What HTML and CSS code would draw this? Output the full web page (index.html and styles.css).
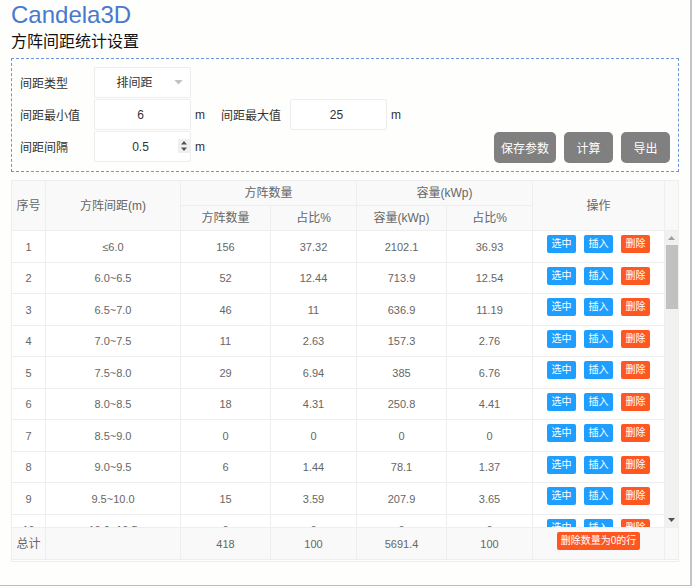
FILE: index.html
```html
<!DOCTYPE html>
<html lang="zh-CN">
<head>
<meta charset="utf-8">
<title>Candela3D</title>
<link rel="stylesheet" href="styles.css">
</head>
<body>
<main class="page">
  <h1 class="brand">Candela3D</h1>
  <h2 class="subtitle">方阵间距统计设置</h2>

  <form class="panel">
    <div class="fields">
      <div class="field-row">
        <label class="label" for="type">间距类型</label>
        <div class="control">
          <select id="type" class="box box-select"><option>排间距</option></select>
          <svg class="caret" viewBox="0 0 10 6" aria-hidden="true"><path d="M0 0h10L5 5.500z"/></svg>
        </div>
      </div>
      <div class="field-row">
        <label class="label" for="min">间距最小值</label>
        <div class="control"><input id="min" class="box" type="text" value="6"></div>
        <span class="unit">m</span>
        <label class="label label-second" for="max">间距最大值</label>
        <div class="control"><input id="max" class="box" type="text" value="25"></div>
        <span class="unit">m</span>
      </div>
      <div class="field-row">
        <label class="label" for="step">间距间隔</label>
        <div class="control">
          <input id="step" class="box box-number" type="number" step="0.5" value="0.5">
          <svg class="spinner" viewBox="0 0 12 14" aria-hidden="true"><path class="spinner-bg" d="M0 0h12v14H0z"/><path d="M3 5.500L6 2l3 3.500zM3 8.500L6 12l3-3.500z"/></svg>
        </div>
        <span class="unit">m</span>
      </div>
    </div>
    <div class="actions">
      <button class="action" type="button">保存参数</button>
      <button class="action" type="button">计算</button>
      <button class="action" type="button">导出</button>
    </div>
  </form>

  <section class="grid">
    <div class="band band-head">
      <table class="table">
        <colgroup><col class="c-no"><col class="c-range"><col class="c-num"><col class="c-pct"><col class="c-num"><col class="c-pct"><col class="c-ops"></colgroup>
        <thead>
          <tr><th rowspan="2">序号</th><th rowspan="2">方阵间距(m)</th><th colspan="2">方阵数量</th><th colspan="2">容量(kWp)</th><th rowspan="2">操作</th></tr>
          <tr><th>方阵数量</th><th>占比%</th><th>容量(kWp)</th><th>占比%</th></tr>
        </thead>
      </table>
      <div class="gutter"></div>
    </div>

    <div class="band">
      <div class="scroll">
        <table class="table">
          <colgroup><col class="c-no"><col class="c-range"><col class="c-num"><col class="c-pct"><col class="c-num"><col class="c-pct"><col class="c-ops"></colgroup>
          <tbody>
            <tr><td>1</td><td>≤6.0</td><td>156</td><td>37.32</td><td>2102.1</td><td>36.93</td><td class="ops"><div class="btns"><button class="btn">选中</button><button class="btn">插入</button><button class="btn btn-danger">删除</button></div></td></tr>
            <tr><td>2</td><td>6.0~6.5</td><td>52</td><td>12.44</td><td>713.9</td><td>12.54</td><td class="ops"><div class="btns"><button class="btn">选中</button><button class="btn">插入</button><button class="btn btn-danger">删除</button></div></td></tr>
            <tr><td>3</td><td>6.5~7.0</td><td>46</td><td>11</td><td>636.9</td><td>11.19</td><td class="ops"><div class="btns"><button class="btn">选中</button><button class="btn">插入</button><button class="btn btn-danger">删除</button></div></td></tr>
            <tr><td>4</td><td>7.0~7.5</td><td>11</td><td>2.63</td><td>157.3</td><td>2.76</td><td class="ops"><div class="btns"><button class="btn">选中</button><button class="btn">插入</button><button class="btn btn-danger">删除</button></div></td></tr>
            <tr><td>5</td><td>7.5~8.0</td><td>29</td><td>6.94</td><td>385</td><td>6.76</td><td class="ops"><div class="btns"><button class="btn">选中</button><button class="btn">插入</button><button class="btn btn-danger">删除</button></div></td></tr>
            <tr><td>6</td><td>8.0~8.5</td><td>18</td><td>4.31</td><td>250.8</td><td>4.41</td><td class="ops"><div class="btns"><button class="btn">选中</button><button class="btn">插入</button><button class="btn btn-danger">删除</button></div></td></tr>
            <tr><td>7</td><td>8.5~9.0</td><td>0</td><td>0</td><td>0</td><td>0</td><td class="ops"><div class="btns"><button class="btn">选中</button><button class="btn">插入</button><button class="btn btn-danger">删除</button></div></td></tr>
            <tr><td>8</td><td>9.0~9.5</td><td>6</td><td>1.44</td><td>78.1</td><td>1.37</td><td class="ops"><div class="btns"><button class="btn">选中</button><button class="btn">插入</button><button class="btn btn-danger">删除</button></div></td></tr>
            <tr><td>9</td><td>9.5~10.0</td><td>15</td><td>3.59</td><td>207.9</td><td>3.65</td><td class="ops"><div class="btns"><button class="btn">选中</button><button class="btn">插入</button><button class="btn btn-danger">删除</button></div></td></tr>
            <tr><td>10</td><td>10.0~10.5</td><td>0</td><td>0</td><td>0</td><td>0</td><td class="ops"><div class="btns"><button class="btn">选中</button><button class="btn">插入</button><button class="btn btn-danger">删除</button></div></td></tr>
          </tbody>
        </table>
      </div>
      <div class="scrollbar" aria-hidden="true">
        <svg class="arrow arrow-up" viewBox="0 0 13 14"><path d="M3 9l3.500-4L10 9z"/></svg>
        <div class="thumb"></div>
        <svg class="arrow arrow-down" viewBox="0 0 13 14"><path d="M3 5l3.500 4L10 5z"/></svg>
      </div>
    </div>

    <div class="band band-foot">
      <table class="table">
        <colgroup><col class="c-no"><col class="c-range"><col class="c-num"><col class="c-pct"><col class="c-num"><col class="c-pct"><col class="c-ops"></colgroup>
        <tbody>
          <tr><td>总计</td><td></td><td>418</td><td>100</td><td>5691.4</td><td>100</td><td class="ops"><div class="btns"><button class="btn btn-danger">删除数量为0的行</button></div></td></tr>
        </tbody>
      </table>
      <div class="gutter"></div>
    </div>
  </section>
</main>
</body>
</html>
```
FILE: styles.css
```css
* { box-sizing: border-box; }

body {
  margin: 0;
  background: #fefefc;
  color: #333;
  font-family: "Liberation Sans", "Noto Sans CJK SC", sans-serif;
  font-size: 12px;
}

button, input, select { font: inherit; }

.page {
  min-height: 100vh;
  padding: 0 11px 20px;
  border-right: 2px solid #c4c4c4;
  border-bottom: 1px solid #bcbcbc;
}

.brand {
  margin: 0;
  color: #4879cf;
  font-size: 24px;
  font-weight: 400;
  line-height: 30px;
}

.subtitle {
  margin: 0;
  color: #111;
  font-size: 16px;
  font-weight: 400;
  line-height: 24px;
}

.panel {
  display: flex;
  justify-content: space-between;
  align-items: flex-end;
  margin-top: 4px;
  padding: 8px;
  border: 1px dashed #6f96dc;
}

.fields {
  display: flex;
  flex-direction: column;
  gap: 1px;
  padding-bottom: 1px;
}

.field-row {
  display: flex;
  align-items: center;
}

.label { width: 74px; }

.label-second { width: 69px; }

.control {
  position: relative;
  width: 97px;
}

.box {
  display: block;
  width: 100%;
  height: 31px;
  padding: 0 4px 0 0;
  border: 1px solid #ededed;
  border-radius: 2px;
  background: #fff;
  color: #333;
  text-align: center;
  appearance: none;
}

.box-number { appearance: textfield; }

.box-number::-webkit-inner-spin-button {
  margin: 0;
  appearance: none;
}

.box-select {
  padding-right: 16px;
  text-align-last: center;
}

.caret {
  position: absolute;
  top: 13px;
  right: 8px;
  width: 9px;
  height: 5px;
  fill: #c2c2c2;
  pointer-events: none;
}

.spinner {
  position: absolute;
  top: 8px;
  right: 1px;
  width: 12px;
  height: 14px;
  fill: #505050;
  pointer-events: none;
}

.spinner-bg { fill: #efefef; }

.unit {
  width: 26px;
  margin-left: 4px;
}

.actions {
  display: flex;
  gap: 8px;
}

.action {
  min-width: 49px;
  height: 31px;
  padding: 0 7px;
  border: 0;
  border-radius: 5px;
  background: #808080;
  color: #fff;
}

.grid {
  margin-top: 8px;
  padding-bottom: 1px;
  border: 1px solid #eee;
  color: #666;
}

.band { display: flex; }

.band-head,
.band-foot { background: #f9f9f9; }

.table {
  width: 100%;
  table-layout: fixed;
  border-collapse: separate;
  border-spacing: 0;
  font-size: 11px;
}

.c-no { width: 34px; }
.c-range { width: 135px; }
.c-num { width: 90px; }
.c-pct { width: 86px; }
.c-ops { width: 132px; }

th, td {
  padding: 0;
  border-right: 1px solid #eee;
  border-bottom: 1px solid #eee;
  font-weight: 400;
  line-height: 16px;
  text-align: center;
}

th {
  height: 25px;
  font-size: 12px;
}

td { height: 32px; }

tr:nth-child(even) td { height: 31px; }

.scroll {
  flex: 1;
  height: 296px;
  overflow-y: auto;
  scrollbar-width: none;
  background: #fff;
}

.band-foot { border-top: 1px solid #eee; }

.scrollbar,
.gutter {
  flex: none;
  width: 13px;
}

.gutter { border-bottom: 1px solid #eee; }

.scrollbar {
  display: flex;
  flex-direction: column;
  background: #f1f1f1;
}

.arrow {
  width: 13px;
  height: 14px;
}

.arrow-up { fill: #a0a0a0; }

.arrow-down {
  margin-top: auto;
  fill: #505050;
}

.thumb {
  height: 64px;
  margin-left: 1px;
  background: #c1c1c1;
}

.ops {
  padding-top: 4px;
  vertical-align: top;
}

.btns {
  display: flex;
  justify-content: center;
  gap: 8px;
}

.btn {
  min-width: 29px;
  height: 18px;
  padding: 0 4px;
  border: 0;
  border-radius: 2px;
  background: #1e9fff;
  color: #fff;
  font-size: 10px;
  line-height: 18px;
  white-space: nowrap;
}

.btn-danger { background: #ff5722; }

.band-foot .table td:first-child { font-size: 12px; }
```
